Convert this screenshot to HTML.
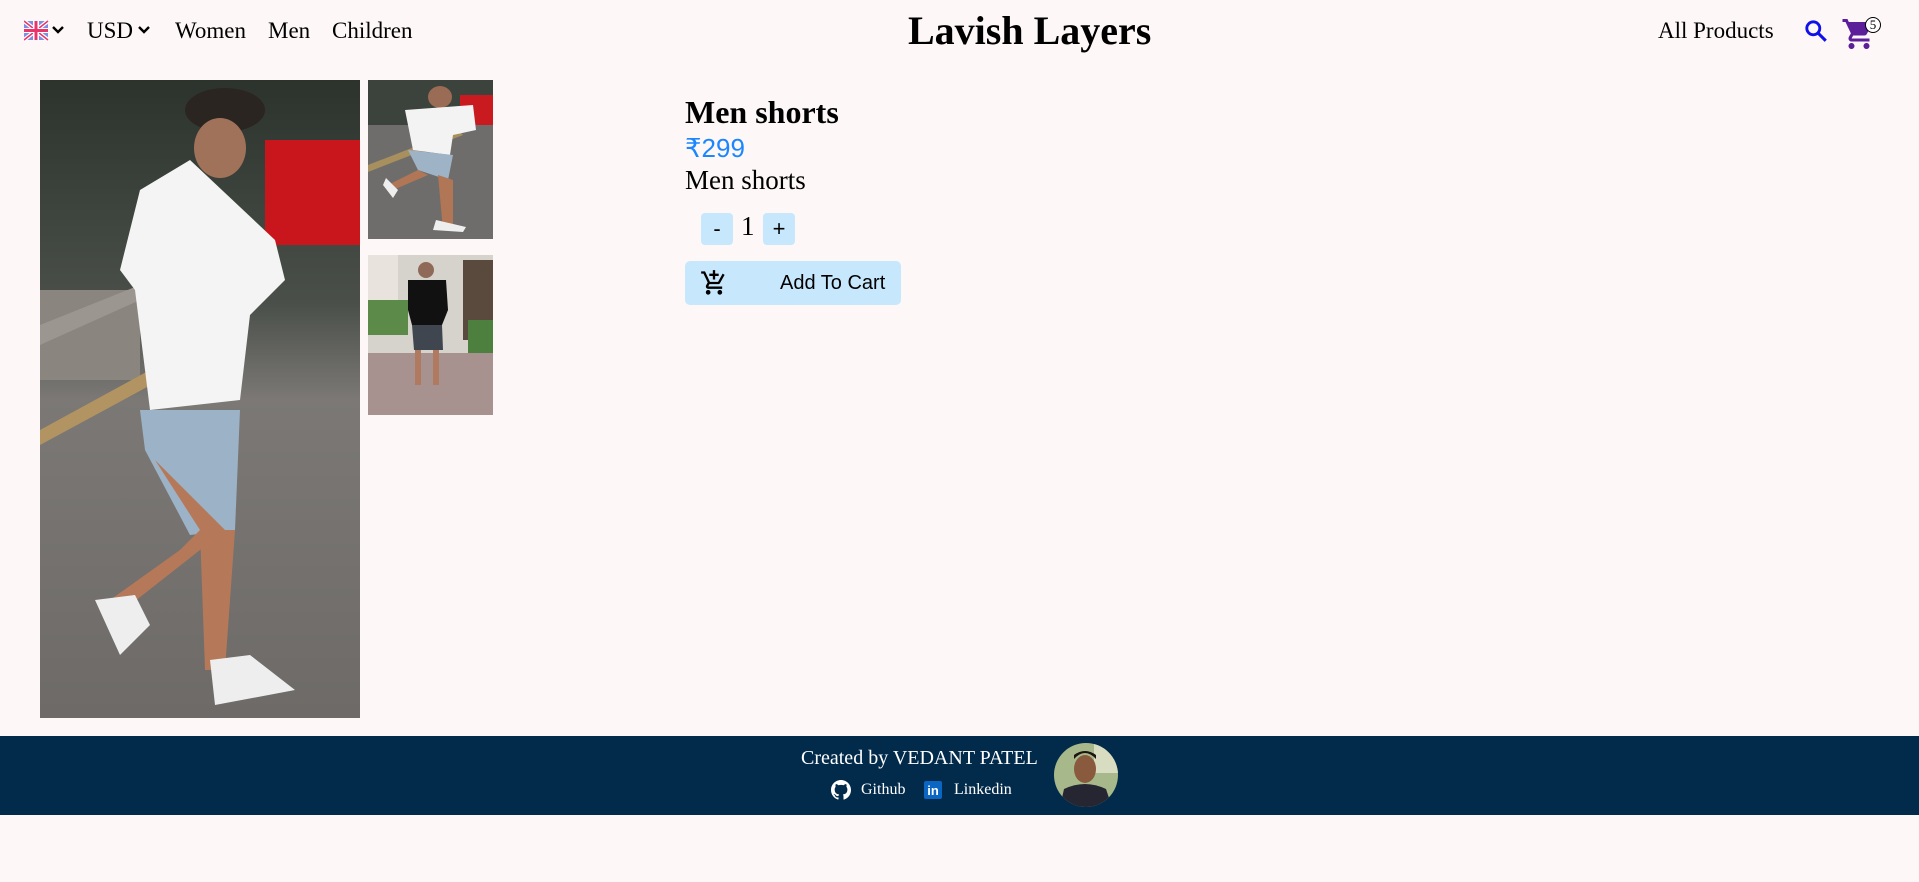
<!DOCTYPE html>
<html><head><meta charset="utf-8"><style>
*{margin:0;padding:0;box-sizing:border-box}
body{width:1919px;height:882px;background:#fdf7f7;font-family:"Liberation Serif",serif;position:relative;overflow:hidden;color:#000}
.a{position:absolute;white-space:nowrap}
.nav{font-size:23px;top:18px}
</style></head><body>
<svg class="a" style="left:24px;top:20px" width="26" height="22" viewBox="0 0 26 22">
<rect x="0" y="1" width="24" height="19" rx="4" fill="#7d8fe0"/>
<path d="M0 1L24 20M24 1L0 20" stroke="#fff" stroke-width="4"/>
<path d="M0 1L24 20M24 1L0 20" stroke="#e8356a" stroke-width="1.5"/>
<rect x="9" y="1" width="6" height="19" fill="#fff"/><rect x="0" y="8" width="24" height="5" fill="#fff"/>
<rect x="10.5" y="1" width="3" height="19" fill="#e8356a"/><rect x="0" y="9" width="24" height="3" fill="#e8356a"/>
</svg>
<svg class="a" style="left:51px;top:25px" width="14" height="10" viewBox="0 0 14 10"><path d="M2 2l5 5 5-5" stroke="#000" stroke-width="2.4" fill="none"/></svg>
<div class="a nav" style="left:87px">USD</div>
<svg class="a" style="left:137px;top:25px" width="14" height="10" viewBox="0 0 14 10"><path d="M2 2l5 5 5-5" stroke="#000" stroke-width="2.4" fill="none"/></svg>
<div class="a nav" style="left:175px">Women</div>
<div class="a nav" style="left:268px">Men</div>
<div class="a nav" style="left:332px">Children</div>
<div class="a" style="left:908px;top:7px;font-size:40px;font-weight:bold">Lavish Layers</div>
<div class="a nav" style="left:1658px">All Products</div>
<svg class="a" style="left:1803px;top:18px" width="26" height="26" viewBox="0 0 24 24"><circle cx="9.5" cy="9.5" r="6" stroke="#1010e8" stroke-width="2.6" fill="none"/><path d="M14 14l7 7" stroke="#1010e8" stroke-width="2.8"/></svg>
<svg class="a" style="left:1841px;top:16px" width="36" height="36" viewBox="0 0 24 24"><path fill="#5b1f9a" d="M7 18c-1.1 0-2 .9-2 2s.9 2 2 2 2-.9 2-2-.9-2-2-2zM1 2v2h2l3.6 7.6-1.4 2.4C5.1 14.3 5 14.7 5 15c0 1.1.9 2 2 2h12v-2H7.4c-.1 0-.2-.1-.2-.2v-.1L8.1 13h7.4c.8 0 1.4-.4 1.7-1l3.6-6.5c.1-.2.2-.3.2-.5 0-.6-.4-1-1-1H5.2L4.3 2H1zm16 16c-1.1 0-2 .9-2 2s.9 2 2 2 2-.9 2-2-.9-2-2-2z"/></svg>
<div class="a" style="left:1865px;top:17px;width:16px;height:16px;border-radius:50%;background:#fff;border:1.5px solid #000;font-size:13px;line-height:13px;text-align:center">5</div>

<svg class="a" style="left:40px;top:80px" width="320" height="638" viewBox="0 0 320 638">
<defs><linearGradient id="bg" x1="0" y1="0" x2="0" y2="1"><stop offset="0" stop-color="#2c332c"/><stop offset=".35" stop-color="#4a4f4a"/><stop offset=".5" stop-color="#7b7875"/><stop offset="1" stop-color="#6d6a67"/></linearGradient></defs>
<rect width="320" height="638" fill="url(#bg)"/>
<rect x="225" y="60" width="95" height="105" fill="#c8161c"/>
<rect x="0" y="210" width="100" height="90" fill="#8a857e"/>
<path d="M0 350L110 290L120 300L0 365Z" fill="#b29462"/>
<path d="M0 245L100 205L100 220L0 265Z" fill="#9b9690"/>
<ellipse cx="185" cy="30" rx="40" ry="22" fill="#2b2521"/>
<ellipse cx="180" cy="68" rx="26" ry="30" fill="#a0725a"/>
<path d="M150 80L235 160L245 200L210 235L200 320L110 330L95 210L80 190L100 110Z" fill="#f4f4f4"/>
<path d="M100 330L200 330L195 450L150 455L105 370Z" fill="#9cb2c6"/>
<path d="M115 380L160 450L140 470L70 520L90 525L160 470L185 450Z" fill="#b5795a"/>
<path d="M160 450L195 450L185 590L165 590Z" fill="#b5795a"/>
<path d="M55 520L95 515L110 545L80 575Z" fill="#eeeeee"/>
<path d="M170 580L210 575L255 610L175 625Z" fill="#eeeeee"/>
</svg>
<svg class="a" style="left:368px;top:80px" width="125" height="159" viewBox="0 0 125 159">
<rect width="125" height="159" fill="#6f6d6b"/><rect width="125" height="45" fill="#3c423c"/>
<rect x="92" y="15" width="33" height="30" fill="#c91a1f"/>
<path d="M0 85L90 50L95 55L0 92Z" fill="#a8905e"/>
<ellipse cx="72" cy="17" rx="12" ry="11" fill="#9a6b55"/>
<path d="M37 30L105 25L108 50L85 55L82 75L45 70Z" fill="#f3f3f3"/>
<path d="M40 70L85 75L80 100L50 90Z" fill="#9eb3c6"/>
<path d="M50 90L20 105L25 110L60 95Z M70 95L75 150L85 150L85 100Z" fill="#b07656"/>
<path d="M18 98L30 110L25 118L15 105Z M68 140L98 147L95 152L65 150Z" fill="#eee"/>
</svg>
<svg class="a" style="left:368px;top:255px" width="125" height="160" viewBox="0 0 125 160">
<rect width="125" height="160" fill="#d6d2cc"/><rect x="0" y="0" width="30" height="80" fill="#e8e3dc"/>
<rect x="95" y="5" width="30" height="80" fill="#5a4a3e"/>
<rect x="0" y="45" width="40" height="35" fill="#5c8a48"/><rect x="100" y="65" width="25" height="35" fill="#4d7f3e"/>
<rect x="0" y="98" width="125" height="62" fill="#a89290"/>
<circle cx="58" cy="15" r="8" fill="#8f6a58"/>
<path d="M40 25L78 25L80 55L74 70L44 70L40 55Z" fill="#111"/>
<path d="M44 70L74 70L75 95L46 95Z" fill="#3f4650"/>
<path d="M47 95L53 95L53 130L47 130Z M65 95L71 95L71 130L65 130Z" fill="#b07a60"/>
</svg>

<div class="a" style="left:685px;top:94px;font-size:32px;font-weight:bold">Men shorts</div>
<div class="a" style="left:685px;top:133px;font-size:26px;color:#1a86ff;font-family:'Liberation Sans','DejaVu Sans',sans-serif">₹299</div>
<div class="a" style="left:685px;top:165px;font-size:27px">Men shorts</div>
<div class="a" style="left:701px;top:213px;width:32px;height:32px;background:#c7e8fc;border-radius:4px;font:22px 'Liberation Sans',sans-serif;text-align:center;line-height:32px">-</div>
<div class="a" style="left:741px;top:211px;font-size:27px">1</div>
<div class="a" style="left:763px;top:213px;width:32px;height:32px;background:#c7e8fc;border-radius:4px;font:22px 'Liberation Sans',sans-serif;text-align:center;line-height:32px">+</div>
<div class="a" style="left:685px;top:261px;width:216px;height:44px;background:#c7e8fc;border-radius:5px"></div>
<svg class="a" style="left:700px;top:269px" width="28" height="28" viewBox="0 0 24 24"><path fill="#000" d="M11 9h2V6h3V4h-3V1h-2v3H8v2h3v3zm-4 9c-1.1 0-2 .9-2 2s.9 2 2 2 2-.9 2-2-.9-2-2-2zm10 0c-1.1 0-2 .9-2 2s.9 2 2 2 2-.9 2-2-.9-2-2-2zm-9.8-3.2v-.1l.9-1.7h7.4c.8 0 1.4-.4 1.7-1l3.9-7-1.7-1-3.9 7H8.5L4.3 2H1v2h2l3.6 7.6-1.4 2.4c-.1.3-.2.6-.2 1 0 1.1.9 2 2 2h12v-2H7.4c-.1 0-.2-.1-.2-.2z"/></svg>
<div class="a" style="left:780px;top:272px;font:20px 'Liberation Sans',sans-serif">Add To Cart</div>

<div class="a" style="left:0;top:736px;width:1919px;height:79px;background:#022a4a"></div>
<div class="a" style="left:801px;top:747px;font-size:20px;color:#fff">Created by VEDANT PATEL</div>
<svg class="a" style="left:831px;top:780px" width="20" height="20" viewBox="0 0 16 16"><path fill="#fff" d="M8 0C3.58 0 0 3.58 0 8c0 3.540 2.29 6.530 5.470 7.590.4.07.55-.17.55-.38v-1.330c-2.230.48-2.700-1.070-2.700-1.070-.36-.92-.89-1.170-.89-1.170-.73-.5.06-.49.06-.49.8.06 1.230.83 1.230.83.72 1.230 1.880.87 2.340.67.07-.52.28-.87.51-1.070-1.780-.2-3.650-.89-3.650-3.950 0-.87.31-1.590.82-2.150-.08-.2-.36-1.020.08-2.120 0 0 .67-.21 2.200.82a7.600 7.600 0 0 1 4 0c1.530-1.040 2.200-.82 2.200-.82.44 1.100.16 1.920.08 2.120.51.56.82 1.270.82 2.150 0 3.070-1.870 3.750-3.650 3.950.29.25.54.73.54 1.480v2.200c0 .21.15.46.55.38A8.010 8.010 0 0 0 16 8c0-4.420-3.580-8-8-8z"/></svg>
<div class="a" style="left:861px;top:781px;font-size:16px;color:#fff">Github</div>
<div class="a" style="left:924px;top:781px;width:18px;height:18px;background:#0a66c2;border-radius:2px;color:#fff;font:bold 13px 'Liberation Sans',sans-serif;text-align:center;line-height:19px">in</div>
<div class="a" style="left:954px;top:781px;font-size:16px;color:#fff">Linkedin</div>
<svg class="a" style="left:1054px;top:743px" width="64" height="64" viewBox="0 0 64 64">
<defs><clipPath id="c"><circle cx="32" cy="32" r="32"/></clipPath></defs>
<g clip-path="url(#c)"><rect width="64" height="64" fill="#a7b98a"/><rect x="40" y="0" width="24" height="30" fill="#d8dcc0"/>
<ellipse cx="31" cy="26" rx="11" ry="14" fill="#8a5a3e"/><path d="M20 16q11-12 22 0v-4q-11-8-22 0z" fill="#1b1410"/>
<path d="M6 64L10 46Q31 36 52 46L58 64Z" fill="#262632"/></g></svg>
</body></html>
